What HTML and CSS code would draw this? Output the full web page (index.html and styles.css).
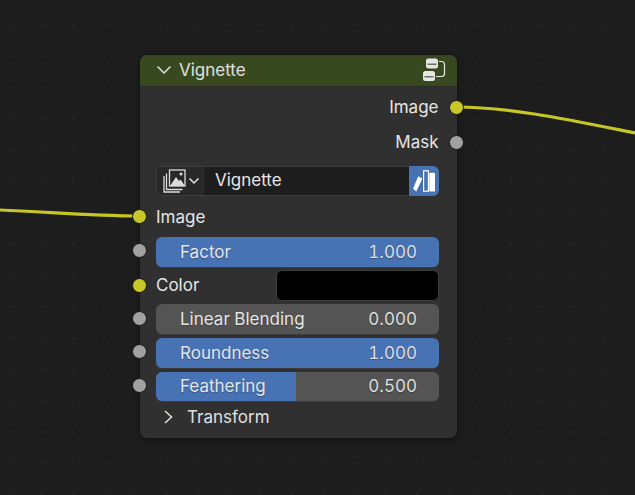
FILE: index.html
```html
<!DOCTYPE html>
<html lang="en">
<head>
<meta charset="utf-8">
<title>Vignette node</title>
<link rel="stylesheet" href="styles.css">
</head>
<body>
<main class="canvas">
  <svg class="links" width="635" height="495" viewBox="0 0 635 495" aria-hidden="true">
    <path d="M456 107 C 510 107 570 120 635 133" />
    <path d="M0 210 C 50 212 90 216 140 216" />
  </svg>
  <section class="node">
    <header class="node-head">
      <svg class="chev-down" width="16" height="10" viewBox="0 0 16 10"><path d="M1.5 1.5 L8 8 L14.5 1.5"/></svg>
      <span class="node-title">Vignette</span>
      <svg class="group-icon" width="24" height="24" viewBox="0 0 24 24">
        <rect x="4" y="0.5" width="12" height="10" rx="2.5" class="gi-fill"/>
        <rect x="5.5" y="5.5" width="9" height="1.5" fill="#6b7260"/>
        <rect x="1" y="13" width="12" height="10" rx="2.5" class="gi-fill"/>
        <rect x="2.5" y="18" width="9" height="1.5" fill="#6b7260"/>
        <path d="M17 3.5 H19.5 Q22.5 3.5 22.5 6.5 V15.5 Q22.5 18.5 19.5 18.5 H14" class="gi-line"/>
      </svg>
    </header>
    <div class="node-body">
      <div class="row row-out first">
        <span class="label">Image</span><i class="socket out yellow"></i>
      </div>
      <div class="row row-out second">
        <span class="label">Mask</span><i class="socket out grey"></i>
      </div>
      <div class="selector">
        <div class="sel-browse">
          <svg width="26" height="24" viewBox="0 0 26 24" class="img-stack">
            <path d="M1 7 V23 H17" class="st"/>
            <path d="M3.5 4.5 V20.5 H19.5" class="st"/>
            <rect x="6.5" y="1" width="15.5" height="16" class="st"/>
            <path d="M7 17 L13 8 L16 12 L17.5 10.5 L22 17 Z" fill="#dcdcdc"/>
            <circle cx="18" cy="5" r="1.5" fill="#dcdcdc"/>
          </svg>
          <svg class="mini-chev" width="12" height="8" viewBox="0 0 12 8"><path d="M1.5 1.5 L6 6 L10.5 1.5"/></svg>
        </div>
        <div class="sel-name">Vignette</div>
        <div class="sel-lib">
          <svg width="24" height="24" viewBox="0 0 24 24">
            <path d="M1 19.8 L6.3 7.2 L10.3 9.8 L4.3 22.5 Z" fill="#fff"/>
            <rect x="11.6" y="1.8" width="4.8" height="20.4" fill="none" stroke="#fff" stroke-width="1.2"/>
            <rect x="17.3" y="3.8" width="5.7" height="18.7" fill="#fff"/>
          </svg>
        </div>
      </div>
      <div class="row row-in image-row">
        <i class="socket in yellow"></i><span class="label">Image</span>
      </div>
      <div class="slider full">
        <i class="socket in grey"></i><span class="s-name">Factor</span><span class="s-val">1.000</span>
      </div>
      <div class="row row-in color-row">
        <i class="socket in yellow"></i><span class="label">Color</span>
        <span class="swatch"></span>
      </div>
      <div class="slider">
        <i class="socket in grey"></i><span class="s-name">Linear Blending</span><span class="s-val">0.000</span>
      </div>
      <div class="slider full">
        <i class="socket in grey"></i><span class="s-name">Roundness</span><span class="s-val">1.000</span>
      </div>
      <div class="slider half">
        <i class="socket in grey"></i><span class="s-name">Feathering</span><span class="s-val">0.500</span>
      </div>
      <div class="panel-row">
        <svg class="chev-right" width="10" height="16" viewBox="0 0 10 16"><path d="M2 2 L8.5 8 L2 14"/></svg>
        <span class="label">Transform</span>
      </div>
    </div>
  </section>
</main>
</body>
</html>
```

FILE: styles.css
```css
html, body {
  margin: 0;
  padding: 0;
  background: #1d1d1d;
}
.canvas {
  position: relative;
  width: 635px;
  height: 495px;
  overflow: hidden;
  background-color: #1d1d1d;
  background-image: radial-gradient(circle, #272727 0, #272727 1px, transparent 1.3px);
  background-size: 31.3px 31.3px;
  background-position: -5.3px 9.4px;
  font-family: Inter, "Liberation Sans", sans-serif;
  font-size: 17px;
  font-variant-numeric: tabular-nums;
  color: #e6e6e6;
}
.links {
  position: absolute;
  left: 0;
  top: 0;
}
.links path {
  fill: none;
  stroke: #c6c624;
  stroke-width: 3.2;
}
.node {
  position: absolute;
  left: 140px;
  top: 55px;
  width: 316.5px;
  height: 382.5px;
  box-sizing: border-box;
  border-radius: 7px;
  background: #303030;
  box-shadow: 0 0 0 1px #141414, 0 2px 6px rgba(0, 0, 0, 0.35);
  display: flex;
  flex-direction: column;
}
.node-head {
  height: 32px;
  flex: none;
  display: flex;
  align-items: center;
  box-sizing: border-box;
  padding: 0 10.5px 1px 16px;
  background: #39491f;
  border-radius: 7px 7px 0 0;
  border-bottom: 1px solid #2a2a2a;
}
.chev-down path, .mini-chev path, .chev-right path {
  fill: none;
  stroke: #e2e2e2;
  stroke-width: 1.5;
}
.node-title {
  margin-left: 7px;
  color: #e0e0e0;
}
.group-icon {
  margin-left: auto;
}
.gi-fill { fill: #e6e6e6; }
.gi-line { fill: none; stroke: #e6e6e6; stroke-width: 1.2; }
.node-body {
  position: relative;
  flex: 1;
  padding: 0 18px 0 16px;
  display: flex;
  flex-direction: column;
}
.row {
  position: relative;
  display: flex;
  align-items: center;
}
.row-out {
  justify-content: flex-end;
  height: 24px;
}
.row-out.first { margin-top: 8px; }
.row-out.second { margin-top: 11px; }
.label {
  line-height: 24px;
  white-space: nowrap;
}
.socket {
  position: absolute;
  width: 13px;
  height: 13px;
  border: 1px solid #141414;
  border-radius: 50%;
  top: 50%;
  margin-top: -7.5px;
  box-sizing: content-box;
}
.slider .socket { margin-top: -8.5px; }
.socket.yellow { background: #c7c729; }
.socket.grey { background: #a1a1a1; }
.socket.out { right: -25.5px; }
.socket.in { left: -24px; }
.selector {
  display: flex;
  height: 29.67px;
  margin-top: 12px;
  box-sizing: border-box;
  border: 1px solid #3d3d3d;
  border-radius: 6px;
  background: #1d1d1d;
}
.sel-browse {
  width: 47px;
  flex: none;
  display: flex;
  align-items: center;
  box-sizing: border-box;
  padding-left: 6px;
  border-right: 1px solid #303030;
  background: #282828;
  border-radius: 5px 0 0 5px;
}
.mini-chev { margin-left: -1px; }
.st { fill: none; stroke: #dcdcdc; stroke-width: 1.3; }
.sel-name {
  flex: 1;
  padding-left: 11px;
  line-height: 27.67px;
  color: #e6e6e6;
}
.sel-lib {
  width: 30px;
  flex: none;
  margin: -1px -1px -1px 0;
  background: #4772b3;
  border-radius: 0 6px 6px 0;
  display: flex;
  align-items: center;
  justify-content: center;
}
.row-in.image-row {
  height: 24px;
  margin-top: 9.33px;
}
.slider {
  position: relative;
  display: flex;
  align-items: center;
  justify-content: space-between;
  height: 29.67px;
  box-sizing: border-box;
  margin-top: 4px;
  padding: 0 21.5px 0 24px;
  border-radius: 6px;
  background: #545454;
  box-shadow: 0 1px 0 #3d3d3d;
  color: #e6e6e6;
}
.slider.full { background: #4772b3; }
.slider.half {
  background: linear-gradient(to right, #4772b3 0, #4772b3 140px, #545454 140px);
}
.image-row + .slider { margin-top: 8px; }
.s-name, .s-val { text-shadow: 0 1px 1px rgba(0, 0, 0, 0.3); }
.s-val { color: #dedede; }
.color-row {
  height: 29.67px;
  margin-top: 4px;
}
.swatch {
  margin-left: auto;
  width: 162.5px;
  height: 30.5px;
  box-sizing: border-box;
  border: 1px solid #3d3d3d;
  border-radius: 6px;
  background: #000;
}
.panel-row {
  display: flex;
  align-items: center;
  height: 24px;
  margin-top: 3.67px;
  padding-left: 7px;
}
.chev-right path { stroke-width: 1.5; }
.panel-row .label { margin-left: 14px; color: #e0e0e0; }
```
